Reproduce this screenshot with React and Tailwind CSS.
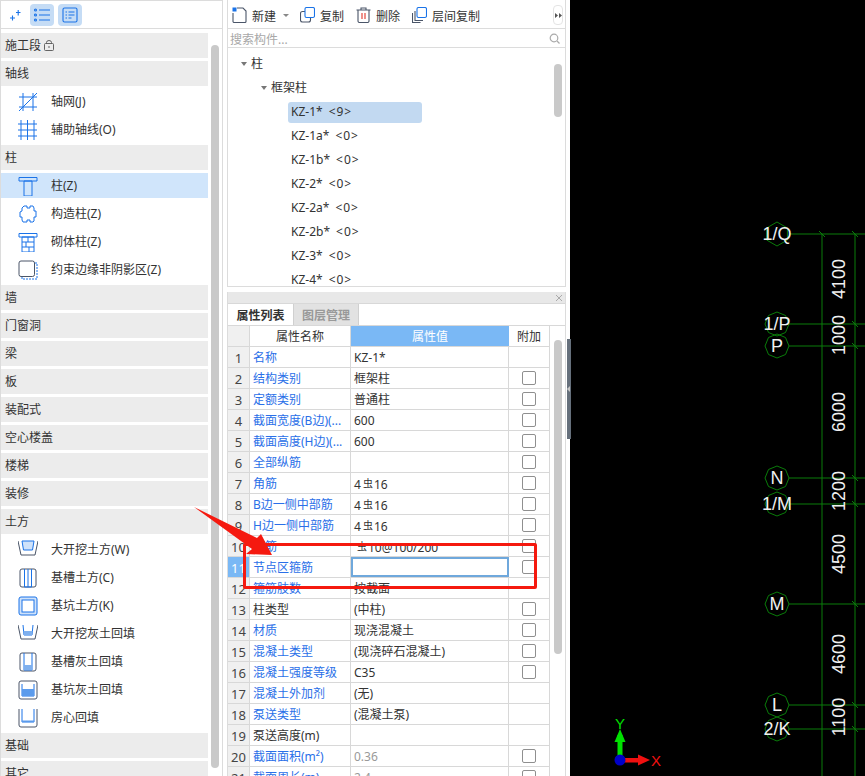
const blue = "#1a73e8";
const dark = "#4a5568";

function Ic({ children }) {
  return (
    <svg width="20" height="20" viewBox="0 0 20 20" fill="none" stroke={blue} strokeWidth="1" className="shrink-0">
      {children}
    </svg>
  );
}

const leftIcons = {
  grid: (
    <Ic>
      <path d="M1 5h18M1 15h18M5 1v18M15 1v18M1 19L19 1" />
    </Ic>
  ),
  aux: (
    <Ic>
      <path d="M0 4h19M0 10h19M0 16h19M3 0v20M9.500 0v20M16 0v20" />
    </Ic>
  ),
  col: (
    <Ic>
      <path d="M1 1.500h18v3.500h-18zM6 5h8v15h-8z" />
    </Ic>
  ),
  gz: (
    <Ic>
      <path d="M6 2h3v2h3V2h3l1 2v3h2v6h-2v4l-1 1h-3v-2H9v2H5l-1-2v-3H2V8l2-1V4z" />
    </Ic>
  ),
  brick: (
    <Ic>
      <path d="M1 1.500h18v3.500H1zM4 5h12v15H4zM4 10h12M4 15h12M10 5v5M8 10v5M11 15v5" />
    </Ic>
  ),
  edge: (
    <Ic>
      <path d="M17 3h2v16H4v-2" strokeDasharray="2 1" />
      <rect x="1" y="1" width="15.500" height="15.500" rx="2" stroke={dark} />
    </Ic>
  ),
  dig: (
    <Ic>
      <path d="M0 1l3 14h14l3-14" stroke={dark} />
      <path d="M4 1h12l-1.500 9h-9z" fill="#cfe2fa" />
    </Ic>
  ),
  slot: (
    <Ic>
      <rect x="2" y="1" width="16" height="18" rx="2" stroke={dark} />
      <path d="M6.500 1v18h7V1M10 1v18" />
    </Ic>
  ),
  pit: (
    <Ic>
      <rect x="1" y="1" width="18" height="18" rx="2" fill="#cfe2fa" />
      <rect x="4" y="4" width="12" height="12" fill="#fff" />
    </Ic>
  ),
  digFill: (
    <Ic>
      <path d="M0 1l3 14h14l3-14" stroke={dark} />
      <path d="M5 1l1 10h8l1-10" />
      <path d="M5.500 7h9l-.500 4H6z" fill="#7fb0ee" stroke="none" />
    </Ic>
  ),
  slotFill: (
    <Ic>
      <rect x="2" y="1" width="16" height="18" rx="2" stroke={dark} />
      <path d="M6 1v17h8V1" />
      <path d="M6 13h8v5H6z" fill="#7fb0ee" stroke="none" />
    </Ic>
  ),
  pitFill: (
    <Ic>
      <rect x="1" y="1" width="18" height="18" rx="2" stroke={dark} />
      <path d="M4 4v12h12V4" />
      <path d="M4 9h12v7H4z" fill="#5b9bec" stroke="none" />
    </Ic>
  ),
  room: (
    <Ic>
      <path d="M1 1v16a2 2 0 0 0 2 2h14a2 2 0 0 0 2-2V1" stroke={dark} />
      <path d="M4 1v13h12V1" />
      <path d="M4 12.500h12V14H4z" fill="#5b9bec" stroke="none" />
    </Ic>
  ),
};

const leftRows = [
  { h: "施工段", lock: true },
  { h: "轴线" },
  { t: "轴网(J)", i: "grid" },
  { t: "辅助轴线(O)", i: "aux" },
  { h: "柱" },
  { t: "柱(Z)", i: "col", on: true },
  { t: "构造柱(Z)", i: "gz" },
  { t: "砌体柱(Z)", i: "brick" },
  { t: "约束边缘非阴影区(Z)", i: "edge" },
  { h: "墙" },
  { h: "门窗洞" },
  { h: "梁" },
  { h: "板" },
  { h: "装配式" },
  { h: "空心楼盖" },
  { h: "楼梯" },
  { h: "装修" },
  { h: "土方" },
  { t: "大开挖土方(W)", i: "dig" },
  { t: "基槽土方(C)", i: "slot" },
  { t: "基坑土方(K)", i: "pit" },
  { t: "大开挖灰土回填", i: "digFill" },
  { t: "基槽灰土回填", i: "slotFill" },
  { t: "基坑灰土回填", i: "pitFill" },
  { t: "房心回填", i: "room" },
  { h: "基础" },
  { h: "其它" },
];

function LeftPanel() {
  return (
    <div className="relative h-full w-[223px] shrink-0 overflow-hidden border-x border-t border-[#dcdcdc]">
      <div className="flex h-[28px] items-center border-b border-[#dcdcdc] pl-[8px]">
        <svg width="12" height="12" viewBox="0 0 12 12" stroke={blue} strokeWidth="1.1" className="mr-[9px]">
          <path d="M1 9h5M3.500 6.500v5M7 3.500h4.500M9.200 1v5.500" />
        </svg>
        <div className="mr-[4px] flex h-[22px] w-[24px] items-center justify-center rounded bg-[#c5dcf5]">
          <svg width="16" height="14" viewBox="0 0 16 14" fill="none" stroke={blue} strokeWidth="1.1">
            <path d="M5 2h11M5 7h11M5 12h11" />
            <circle cx="1.500" cy="2" r="1" />
            <circle cx="1.500" cy="7" r="1" />
            <circle cx="1.500" cy="12" r="1" />
          </svg>
        </div>
        <div className="flex h-[22px] w-[24px] items-center justify-center rounded bg-[#c5dcf5]">
          <svg width="16" height="16" viewBox="0 0 16 16" fill="none" stroke={blue} strokeWidth="1.1">
            <rect x="1" y="1" width="14" height="14" rx="1.500" />
            <path d="M3.500 5h1.500M6.500 5h6M3.500 8h1.500M6.500 8h6M3.500 11h1.500M6.500 11h3" />
          </svg>
        </div>
      </div>
      <div className="mt-[4px] w-[207px]">
        {leftRows.map((r, i) =>
          r.h ? (
            <div key={i} className="h-[28px]">
              <div className="flex h-[25px] items-center bg-[#ececec] pl-[4px] text-[12px] text-[#333]">
                {r.h}
                {r.lock ? (
                  <svg width="10" height="11" viewBox="0 0 10 11" fill="none" stroke="#555" strokeWidth="0.9" className="ml-[3px]">
                    <rect x="0.500" y="3.500" width="9" height="7" rx="1" />
                    <path d="M2.500 3.500V2.500a2.500 2 0 0 1 5 0v1M5 6v2" />
                  </svg>
                ) : null}
              </div>
            </div>
          ) : (
            <div key={i} className="h-[28px]">
              <div className={"flex h-[25px] items-center pl-[17px] text-[12px] text-[#333] " + (r.on ? "bg-[#d0e5fb]" : "")}>
                {leftIcons[r.i]}
                <span className="ml-[13px]">{r.t}</span>
              </div>
            </div>
          )
        )}
      </div>
      <div className="absolute left-[210px] top-[44px] h-[723px] w-[8px] rounded-full bg-[#c9c9c9]" />
    </div>
  );
}

function ToolBtn({ icon, label, className }) {
  return (
    <div className={"flex items-center text-[12px] text-[#333] " + className}>
      {icon}
      <span className="ml-[5px] pt-[3px]">{label}</span>
    </div>
  );
}

const treeItems = ["KZ-1a*", "KZ-1b*", "KZ-2*", "KZ-2a*", "KZ-2b*", "KZ-3*", "KZ-4*"];

function TreePanel() {
  return (
    <div className="relative h-[287px] border-x border-b border-[#dcdcdc]">
      <div className="flex h-[29px] items-center border-b border-[#dcdcdc] pl-[4px] pt-[2px]">
        <ToolBtn
          label="新建"
          icon={
            <svg width="15" height="16" viewBox="0 0 15 16" fill="none" stroke={dark} strokeWidth="1.1">
              <path d="M5 1h6l3 3v10.500a1 1 0 0 1-1 1H2a1 1 0 0 1-1-1V6" />
              <rect x="0.500" y="0.500" width="4" height="4" fill={blue} stroke="none" />
            </svg>
          }
        />
        <div className="ml-[7px] mr-[11px] h-0 w-0 border-x-[3px] border-t-[3px] border-x-transparent border-t-[#888]" />
        <ToolBtn
          label="复制"
          className="mr-[12px]"
          icon={
            <svg width="15" height="16" viewBox="0 0 15 16" fill="none" strokeWidth="1.1">
              <rect x="0.500" y="4.500" width="10" height="10.500" rx="2" stroke={dark} />
              <rect x="5" y="0.500" width="9.500" height="10" rx="1.500" fill="#fff" stroke={blue} />
            </svg>
          }
        />
        <ToolBtn
          label="删除"
          className="mr-[12px]"
          icon={
            <svg width="15" height="16" viewBox="0 0 15 16" fill="none" stroke={dark} strokeWidth="1.1">
              <path d="M0.500 3h14M5 3V1h5v2M2 3v11a1.500 1.500 0 0 0 1.500 1.500h8a1.500 1.500 0 0 0 1.500-1.500V3" />
              <path d="M6 6v6M9 6v6" stroke="#e0352b" />
            </svg>
          }
        />
        <ToolBtn
          label="层间复制"
          icon={
            <svg width="15" height="16" viewBox="0 0 15 16" fill="none" strokeWidth="1.1">
              <path d="M3 4v9.500h8M0.500 6v9.500h8" stroke={dark} />
              <rect x="5" y="0.500" width="9.500" height="10" rx="1.500" fill="#fff" stroke={blue} />
            </svg>
          }
        />
        <div className="absolute left-[325px] top-[5px] flex h-[20px] w-[10px] items-center justify-center rounded border border-[#e4e4e4]">
          <svg width="7" height="5" viewBox="0 0 7 5" fill="#555">
            <path d="M0 0l3 2.500L0 5zM4 0l3 2.500L4 5z" />
          </svg>
        </div>
      </div>
      <div className="flex h-[19px] items-center justify-between border-b border-[#dcdcdc] pl-[2px] pr-[5px] text-[12px] text-[#a8a8a8]">
        <span className="pt-[3px]">搜索构件...</span>
        <svg width="11" height="11" viewBox="0 0 11 11" fill="none" stroke="#aaa" strokeWidth="1.200">
          <circle cx="5" cy="5" r="3.800" />
          <path d="M8 8l2.500 2.500" />
        </svg>
      </div>
      <div className="relative h-[237px] overflow-hidden pt-[4px] text-[12px] text-[#333]">
        <div className="flex h-[24px] items-center pl-[13px]">
          <div className="mr-[4px] h-0 w-0 border-x-[3px] border-t-[4px] border-x-transparent border-t-[#777]" />
          柱
        </div>
        <div className="flex h-[24px] items-center pl-[33px]">
          <div className="mr-[4px] h-0 w-0 border-x-[3px] border-t-[4px] border-x-transparent border-t-[#777]" />
          框架柱
        </div>
        <div className="flex h-[24px] items-center pl-[60px]">
          <div className="flex h-[21px] w-[134px] items-center rounded-[3px] bg-[#c2d9f1] pl-[3px]">
            KZ-1*<span className="ml-[6px] tracking-[1px]">&lt;9&gt;</span>
          </div>
        </div>
        {treeItems.map((t) => (
          <div key={t} className="flex h-[24px] items-center pl-[63px]">
            {t}
            <span className="ml-[6px] tracking-[1px]">&lt;0&gt;</span>
          </div>
        ))}
        <div className="absolute left-[326px] top-[16px] h-[53px] w-[8px] rounded-full bg-[#c9c9c9]" />
      </div>
    </div>
  );
}

const propRows = [
  ["名称", "KZ-1*", 1, 0],
  ["结构类别", "框架柱", 1, 1],
  ["定额类别", "普通柱", 1, 1],
  ["截面宽度(B边)(...", "600", 1, 1],
  ["截面高度(H边)(...", "600", 1, 1],
  ["全部纵筋", "", 1, 1],
  ["角筋", "4|16", 1, 1],
  ["B边一侧中部筋", "4|16", 1, 1],
  ["H边一侧中部筋", "4|16", 1, 1],
  ["箍筋", "|10@100/200", 1, 1],
  ["节点区箍筋", "", 1, 1],
  ["箍筋肢数", "按截面", 1, 0],
  ["柱类型", "(中柱)", 0, 1],
  ["材质", "现浇混凝土", 1, 1],
  ["混凝土类型", "(现浇碎石混凝土)", 1, 1],
  ["混凝土强度等级", "C35", 1, 1],
  ["混凝土外加剂", "(无)", 1, 0],
  ["泵送类型", "(混凝土泵)", 1, 0],
  ["泵送高度(m)", "", 0, 0],
  ["截面面积(m²)", "0.36", 1, 1],
  ["截面周长(m)", "2.4", 1, 1],
];

function RebarValue({ value }) {
  const parts = value.split("|");
  return (
    <>
      {parts[0]}
      <span className={"mr-[1px] align-[2px] text-[10px] " + (parts[0] ? "ml-[2px]" : "ml-[3px]")}>虫</span>
      {parts[1]}
    </>
  );
}

function PropPanel() {
  return (
    <div className="mt-[5px] h-[485px] overflow-hidden border-x border-[#dcdcdc]">
      <div className="flex h-[11px] items-center justify-end bg-[#e8e8e8] pr-[2px]">
        <svg width="8" height="8" viewBox="0 0 8 8" stroke="#aaa" strokeWidth="1">
          <path d="M1 1l6 6M7 1L1 7" />
        </svg>
      </div>
      <div className="flex h-[23px] border-y border-[#d8d8d8] text-[12px]">
        <div className="flex w-[65px] items-center justify-center pt-[2px] font-bold text-[#333]">属性列表</div>
        <div className="flex w-[66px] items-center justify-center border-x border-[#d0d0d0] bg-[#e2e2e2] pt-[2px] font-bold text-[#999]">图层管理</div>
      </div>
      <div className="relative">
        <div className="grid h-[21px] w-[322px] grid-cols-[22px_101px_158px_41px] border-b border-[#d8d8d8] text-[12px]">
          <div className="border-r border-[#d8d8d8] bg-[#f0f0f0]" />
          <div className="flex items-center justify-center border-r border-[#d8d8d8] pt-[2px] text-[#333]">属性名称</div>
          <div className="flex items-center justify-center bg-[#7ab8f5] pt-[2px] text-white">属性值</div>
          <div className="flex items-center justify-center border-r border-[#d8d8d8] pt-[2px] text-[#333]">附加</div>
        </div>
        {propRows.map((r, i) => {
          const sel = i === 10;
          return (
            <div key={i} className="grid h-[21px] w-[322px] grid-cols-[22px_101px_158px_41px] border-b border-[#d8d8d8] text-[12px] leading-none">
              <div className={"flex items-center justify-center border-r border-[#d8d8d8] pt-[2px] text-[13px] " + (sel ? "bg-[#7ab8f5] text-white" : "bg-[#f0f0f0] text-[#444]")}>
                {i + 1}
              </div>
              <div className={"flex items-center overflow-hidden whitespace-nowrap border-r border-[#d8d8d8] pl-[3px] pt-[2px] " + (r[2] ? "text-[#2a6fe8]" : "text-[#333]")}>
                {r[0]}
              </div>
              <div className={"flex items-center pl-[3px] " + (sel ? "border-2 border-[#6fa8dc] " : "border-r border-[#d8d8d8] pt-[2px] ") + (i >= 19 ? "text-[#999]" : "text-[#333]")}>
                <span>{r[1].includes("|") ? <RebarValue value={r[1]} /> : r[1]}</span>
              </div>
              <div className="flex items-center justify-center border-r border-[#d8d8d8]">
                {r[3] ? <div className="h-[14px] w-[14px] rounded-[2px] border border-[#8f8f8f] bg-white" /> : null}
              </div>
            </div>
          );
        })}
        <div className="absolute left-[326px] top-[14px] h-[314px] w-[8px] rounded-full bg-[#c9c9c9]" />
      </div>
    </div>
  );
}

function Hex({ x, y, n = 8, label, size = 18 }) {
  const pts = [];
  for (let i = 0; i < n; i++) {
    const a = -Math.PI / 2 + (i * 2 * Math.PI) / n;
    pts.push((x + 12 * Math.cos(a)).toFixed(1) + "," + (y + 12 * Math.sin(a)).toFixed(1));
  }
  return (
    <g>
      <polygon points={pts.join(" ")} fill="none" stroke="#0a7d0a" strokeWidth="1" />
      <text x={x} y={y + 5.500} textAnchor="middle" fill="#f0f0f0" fontSize={size} fontFamily="'Liberation Sans', sans-serif">
        {label}
      </text>
    </g>
  );
}

const axisLines = [
  { y: 234, label: "1/Q", n: 6 },
  { y: 324, label: "1/P", n: 8 },
  { y: 346, label: "P", n: 8 },
  { y: 478, label: "N", n: 8 },
  { y: 504, label: "1/M", n: 8 },
  { y: 604, label: "M", n: 8 },
  { y: 705, label: "L", n: 8 },
  { y: 729, label: "2/K", n: 8 },
];

const dims = [
  ["4100", 279],
  ["1000", 335],
  ["6000", 412],
  ["1200", 491],
  ["4500", 554],
  ["4600", 654],
  ["1100", 717],
  ["4000", 796],
];

function CadCanvas() {
  return (
    <svg viewBox="570 0 295 776" width="295" height="776" className="block shrink-0 bg-black">
      <path d="M822 234V776M855 234V776" stroke="#0a7d0a" strokeWidth="1" />
      {axisLines.map((a) => (
        <g key={a.label}>
          <path d={"M789 " + a.y + "H865"} stroke="#0a7d0a" strokeWidth="1" />
          <path d={"M852 " + (a.y - 3) + "L858 " + (a.y + 3)} stroke="#0a7d0a" strokeWidth="1" />
          <Hex x={777} y={a.y} n={a.n} label={a.label} />
        </g>
      ))}
      <path d="M819 231L825 237" stroke="#0a7d0a" strokeWidth="1" />
      {dims.map((d) => (
        <text
          key={d[1]}
          x={0}
          y={0}
          transform={"translate(845 " + d[1] + ") rotate(-90)"}
          textAnchor="middle"
          fill="#f0f0f0"
          fontSize="18"
          fontFamily="'Liberation Sans', sans-serif"
        >
          {d[0]}
        </text>
      ))}
      <rect x="617.500" y="735" width="5" height="22" fill="#00e000" />
      <path d="M620 729L625.500 742H614.500Z" fill="#00e000" />
      <rect x="624" y="758" width="16" height="4.500" fill="#f01010" />
      <path d="M650 760L638 754.500V765.500Z" fill="#f01010" />
      <circle cx="620" cy="760" r="5.500" fill="#0000c8" />
      <text x="620" y="729" textAnchor="middle" fill="#00e000" fontSize="15" fontFamily="'Liberation Sans', sans-serif">Y</text>
      <text x="656" y="766" textAnchor="middle" fill="#f01010" fontSize="15" fontFamily="'Liberation Sans', sans-serif">X</text>
    </svg>
  );
}

export default function App() {
  return (
    <div className="relative flex h-[776px] w-[865px] overflow-hidden bg-white font-['Noto_Sans','Noto_Sans_CJK_SC',sans-serif]">
      <LeftPanel />
      <div className="ml-[4px] w-[339px] shrink-0">
        <TreePanel />
        <PropPanel />
      </div>
      <div className="relative w-[4px] shrink-0 bg-white">
        <div className="absolute left-[1px] top-[339px] flex h-[100px] w-[4px] items-center bg-[#66707c]">
          <div className="h-0 w-0 border-y-[3px] border-r-[3px] border-y-transparent border-r-[#c8c8c8]" />
        </div>
      </div>
      <CadCanvas />
      <div className="absolute left-[243px] top-[543px] h-[46px] w-[294px] rounded-[2px] border-[3px] border-[#f5190f]" />
      <svg className="absolute left-[190px] top-[500px]" width="90" height="60" viewBox="190 500 90 60">
        <path d="M194 507L257 538L261 534L272 555L246 554L252 549Z" fill="#f5190f" />
      </svg>
    </div>
  );
}
